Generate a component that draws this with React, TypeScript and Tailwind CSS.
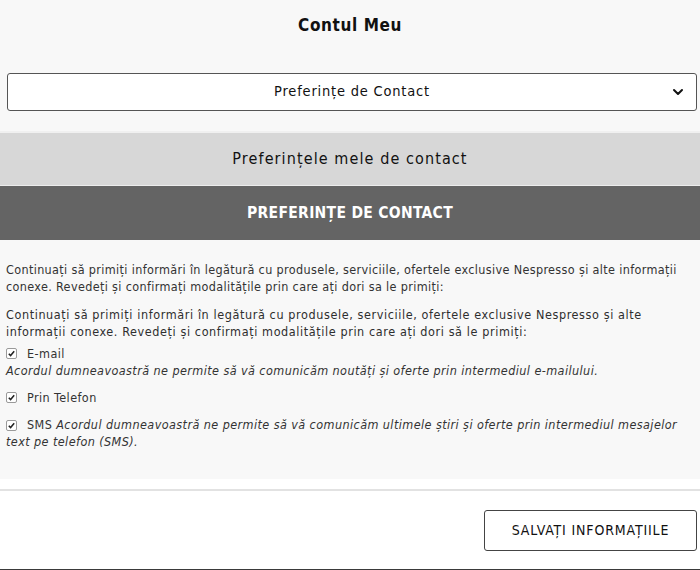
import { ChevronDown } from "lucide-react"

const Check = () => (
  <span className="mr-[10px] inline-flex h-[11px] w-[11px] shrink-0 items-center justify-center rounded-[2px] border border-[#9a9a9a] bg-white align-[-1px]">
    <svg viewBox="0 0 10 10" className="h-[9px] w-[9px]">
      <path d="M2 5.2 L4 7.3 L8 2.6" fill="none" stroke="#222" strokeWidth="1.7" />
    </svg>
  </span>
)

const App = () => {
  return (
    <div className="min-h-[570px] w-full bg-white text-[#333]" style={{ fontFamily: '"DejaVu Sans Condensed", "DejaVu Sans", sans-serif' }}>
      <div className="bg-[#f8f8f8]">
        <h1 className="pt-[14px] text-center text-[17px] font-bold leading-[22px] tracking-[0.6px] text-[#111]">
          Contul Meu
        </h1>

        <div className="pl-[7px] pr-[3px] pt-[37px] pb-[20px]">
          <div className="relative flex h-[38px] items-center justify-center rounded-[3px] border border-[#555] bg-white text-[14.5px] tracking-[0.8px] text-[#111]">
            Preferințe de Contact
            <ChevronDown className="absolute right-[10px] h-[16px] w-[16px]" strokeWidth={3} />
          </div>
        </div>

        <div className="border-t-2 border-[#f0f0f0] bg-[#d7d7d7] py-[15px] text-center text-[16px] leading-[22px] tracking-[1.1px] text-[#111]">
          Preferințele mele de contact
        </div>
        <div className="border-t border-[#ececec] bg-[#646464] pt-[16px] pb-[16px] text-center text-[15.5px] font-bold leading-[22px] tracking-[0.3px] text-white">
          PREFERINȚE DE CONTACT
        </div>

        <div className="px-[6px] pt-[21px] pb-[29px] text-[12.5px] leading-[17px]">
          <p className="tracking-[0.35px]">
            Continuați să primiți informări în legătură cu produsele, serviciile, ofertele exclusive Nespresso și alte informații
            conexe. Revedeți și confirmați modalitățile prin care ați dori sa le primiți:
          </p>
          <p className="mt-[11px] pr-[40px] tracking-[0.6px] text-[#2e2e2e]">
            Continuați să primiți informări în legătură cu produsele, serviciile, ofertele exclusive Nespresso și alte
            informații conexe. Revedeți și confirmați modalitățile prin care ați dori să le primiți:
          </p>

          <div className="mt-[5px] flex flex-col gap-[10px] tracking-[0.42px]">
            <div>
              <div className="flex items-center">
                <Check />
                <span>E-mail</span>
              </div>
              <p className="italic">Acordul dumneavoastră ne permite să vă comunicăm noutăți și oferte prin intermediul e-mailului.</p>
            </div>
            <div className="flex items-center">
              <Check />
              <span>Prin Telefon</span>
            </div>
            <p>
              <Check />
              <span>SMS </span>
              <span className="italic">Acordul dumneavoastră ne permite să vă comunicăm ultimele știri și oferte prin intermediul mesajelor text pe telefon (SMS).</span>
            </p>
          </div>
        </div>
      </div>

      <div className="h-[10px] bg-white" />
      <div className="border-t-2 border-[#e2e2e2] bg-white">
        <div className="flex justify-end px-[3px] pt-[19px] pb-[18px]">
          <button
            type="button"
            className="h-[41px] w-[213px] rounded-[3px] border border-[#444] bg-white text-[14px] tracking-[0.85px] text-[#111]"
          >
            SALVAȚI INFORMAȚIILE
          </button>
        </div>
        <div className="h-[2px] bg-[#3a3a3a]" />
      </div>
    </div>
  )
}

export default App
